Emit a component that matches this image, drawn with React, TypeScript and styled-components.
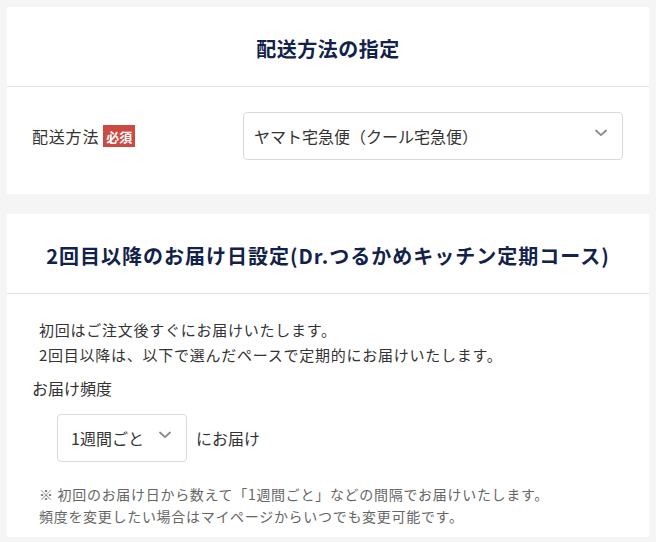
import React from "react";
import styled, { createGlobalStyle } from "styled-components";

const GlobalStyle = createGlobalStyle`
    html, body {
        margin: 0;
        padding: 0;
        background: #f5f5f5;
    }
    body {
        font-family: "Noto Sans CJK JP", "Noto Sans", sans-serif;
        color: #333;
    }
`;

const Page = styled.div`
    display: flex;
    flex-direction: column;
    gap: 20px;
    padding: 7px;
`;

const Card = styled.section`
    background: #fff;
`;

const CardHeader = styled.h2<{ spacing?: string }>`
    margin: 0;
    height: 76px;
    padding-top: 3px;
    display: flex;
    align-items: center;
    justify-content: center;
    border-bottom: 1px solid #e2e2e2;
    font-size: 20px;
    font-weight: 700;
    color: #13224a;
    letter-spacing: ${props => props.spacing || "0.5px"};
`;

const MethodRow = styled.div`
    display: grid;
    grid-template-columns: 211px 1fr;
    align-items: center;
    padding: 25px 26px 34px 25px;
`;

const FieldLabel = styled.label`
    display: flex;
    align-items: center;
    gap: 4px;
    font-size: 16px;
    letter-spacing: 0.05em;
    color: #333;
`;

const RequiredBadge = styled.span`
    display: inline-flex;
    align-items: center;
    justify-content: center;
    height: 22px;
    padding: 0 3px;
    background: #cc4a42;
    color: #fff;
    font-size: 13px;
    font-weight: 700;
    letter-spacing: 0;
`;

const SelectBox = styled.div<{ width?: string }>`
    box-sizing: border-box;
    display: flex;
    align-items: center;
    justify-content: space-between;
    width: ${props => props.width || "100%"};
    height: 48px;
    padding: 0 15px 0 ${props => props.width ? "13px" : "10px"};
    border: 1px solid #dadada;
    border-radius: 4px;
    background: #fff;
    font-size: 16px;
    color: #333;

    svg {
        margin-top: -7px;
        flex-shrink: 0;
    }
`;

const CardBody = styled.div`
    padding: 23px 25px 10px;
`;

const Intro = styled.p`
    margin: 0 0 9px 7px;
    font-size: 15px;
    line-height: 25px;
    letter-spacing: 0.05em;
    color: #333;
`;

const SubLabel = styled.div`
    font-size: 16px;
    line-height: 24px;
    color: #333;
`;

const FrequencyRow = styled.div`
    display: flex;
    align-items: center;
    gap: 9px;
    margin: 14px 0 21px 25px;
    font-size: 16px;
    color: #333;
`;

const Note = styled.p`
    margin: 0 0 0 7px;
    font-size: 14px;
    line-height: 22px;
    letter-spacing: 0.05em;
    color: #666;
`;

const Chevron = () => (
    <svg width="12" height="8" viewBox="0 0 12 8" fill="none">
        <path d="M1 1.5 L6 6.2 L11 1.5" stroke="#8a8a8a" strokeWidth="1.8" strokeLinecap="round" strokeLinejoin="round" />
    </svg>
);

export default function App() {
    return (
        <>
            <GlobalStyle />
            <Page>
                <Card>
                    <CardHeader>配送方法の指定</CardHeader>
                    <MethodRow>
                        <FieldLabel>
                            配送方法<RequiredBadge>必須</RequiredBadge>
                        </FieldLabel>
                        <SelectBox>
                            <span>ヤマト宅急便（クール宅急便）</span>
                            <Chevron />
                        </SelectBox>
                    </MethodRow>
                </Card>
                <Card>
                    <CardHeader spacing="1px">2回目以降のお届け日設定(Dr.つるかめキッチン定期コース)</CardHeader>
                    <CardBody>
                        <Intro>
                            初回はご注文後すぐにお届けいたします。<br />
                            2回目以降は、以下で選んだペースで定期的にお届けいたします。
                        </Intro>
                        <SubLabel>お届け頻度</SubLabel>
                        <FrequencyRow>
                            <SelectBox width="130px">
                                <span>1週間ごと</span>
                                <Chevron />
                            </SelectBox>
                            <span>にお届け</span>
                        </FrequencyRow>
                        <Note>
                            ※ 初回のお届け日から数えて「1週間ごと」などの間隔でお届けいたします。<br />
                            頻度を変更したい場合はマイページからいつでも変更可能です。
                        </Note>
                    </CardBody>
                </Card>
            </Page>
        </>
    );
}
